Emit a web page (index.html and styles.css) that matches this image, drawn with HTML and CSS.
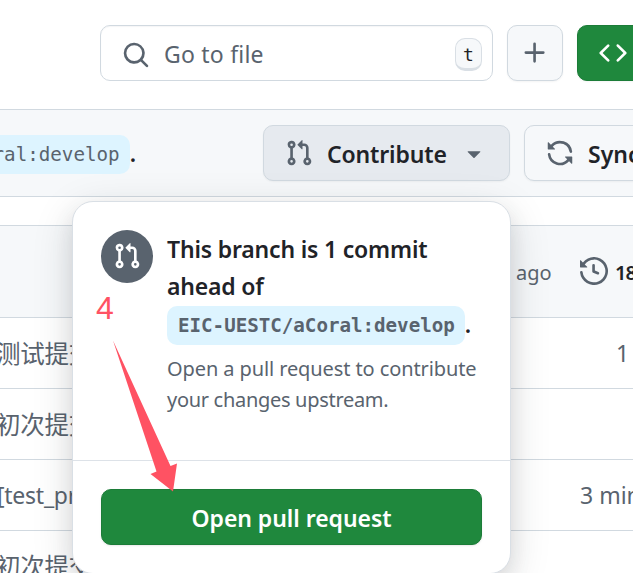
FILE: index.html
```html
<!DOCTYPE html>
<html lang="en">
<head>
<meta charset="utf-8">
<title>Contribute</title>
<link rel="stylesheet" href="styles.css">
</head>
<body>
<svg class="defs" aria-hidden="true">
  <symbol id="pr" viewBox="0 0 16 16"><path d="M1.5 3.25a2.25 2.25 0 1 1 3 2.122v5.256a2.251 2.251 0 1 1-1.5 0V5.372A2.25 2.25 0 0 1 1.5 3.25Zm5.677-.177L9.573.677A.25.25 0 0 1 10 .854V2.5h1A2.5 2.5 0 0 1 13.5 5v5.628a2.251 2.251 0 1 1-1.5 0V5a1 1 0 0 0-1-1h-1v1.646a.25.25 0 0 1-.427.177L7.177 3.427a.25.25 0 0 1 0-.354ZM3.75 2.5a.75.75 0 1 0 0 1.5.75.75 0 0 0 0-1.5Zm0 9.5a.75.75 0 1 0 0 1.5.75.75 0 0 0 0-1.5Zm8.25.75a.75.75 0 1 0 1.5 0 .75.75 0 0 0-1.5 0Z"/></symbol>
</svg>
<div class="page">
  <header class="toolbar">
    <div class="search">
      <svg class="icon" viewBox="0 0 16 16"><path d="M10.68 11.74a6 6 0 0 1-7.922-8.982 6 6 0 0 1 8.982 7.922l3.04 3.04a.749.749 0 0 1-.326 1.275.749.749 0 0 1-.734-.215ZM11.5 7a4.499 4.499 0 1 0-8.997 0A4.499 4.499 0 0 0 11.5 7Z"/></svg>
      <span class="placeholder">Go to file</span>
      <kbd class="key">t</kbd>
    </div>
    <button class="btn square"><svg class="icon" viewBox="0 0 16 16"><path d="M7.75 2a.75.75 0 0 1 .75.75V7h4.25a.75.75 0 0 1 0 1.5H8.5v4.25a.75.75 0 0 1-1.5 0V8.5H2.75a.75.75 0 0 1 0-1.5H7V2.75A.75.75 0 0 1 7.75 2Z"/></svg></button>
    <button class="btn code"><svg class="icon" viewBox="0 0 16 16"><path d="m11.28 3.22 4.25 4.25a.75.75 0 0 1 0 1.06l-4.25 4.25a.749.749 0 0 1-1.275-.326.749.749 0 0 1 .215-.734L13.94 8l-3.72-3.72a.749.749 0 0 1 .326-1.275.749.749 0 0 1 .734.215Zm-6.56 0a.751.751 0 0 1 1.042.018.751.751 0 0 1 .018 1.042L2.06 8l3.72 3.72a.749.749 0 0 1-.326 1.275.749.749 0 0 1-.734-.215L.47 8.53a.75.75 0 0 1 0-1.06Z"/></svg></button>
  </header>
  <section class="branchbar">
    <div class="status"><code class="ref">aCoral:develop</code><span class="dot">.</span></div>
    <button class="btn contribute"><svg class="icon"><use href="#pr"/></svg><span class="label">Contribute</span><svg class="icon caret" viewBox="0 0 16 16"><path d="m4.427 7.427 3.396 3.396a.25.25 0 0 0 .354 0l3.396-3.396A.25.25 0 0 0 11.396 7H4.604a.25.25 0 0 0-.177.427Z"/></svg></button>
    <button class="btn sync"><svg class="icon" viewBox="0 0 16 16"><path d="M1.705 8.005a.75.75 0 0 1 .834.656 5.5 5.5 0 0 0 9.592 2.97l-1.204-1.204a.25.25 0 0 1 .177-.427h3.646a.25.25 0 0 1 .25.25v3.646a.25.25 0 0 1-.427.177l-1.38-1.38A7.002 7.002 0 0 1 1.05 8.84a.75.75 0 0 1 .656-.834ZM8 2.5a5.487 5.487 0 0 0-4.131 1.869l1.204 1.204A.25.25 0 0 1 4.896 6H1.25A.25.25 0 0 1 1 5.75V2.104a.25.25 0 0 1 .427-.177l1.38 1.38A7.002 7.002 0 0 1 14.95 7.16a.75.75 0 0 1-1.49.178A5.5 5.5 0 0 0 8 2.5Z"/></svg><span class="label">Sync</span></button>
  </section>
  <main class="files">
    <div class="row head"><span class="ago">ago</span><svg class="icon" viewBox="0 0 16 16"><path d="m.427 1.927 1.215 1.215a8.002 8.002 0 1 1-1.6 5.685.75.75 0 1 1 1.493-.154 6.5 6.5 0 1 0 1.18-4.458l1.358 1.358A.25.25 0 0 1 3.896 6H.25A.25.25 0 0 1 0 5.75V2.104a.25.25 0 0 1 .427-.177ZM7.75 4a.75.75 0 0 1 .75.75v2.992l2.028.812a.75.75 0 0 1-.557 1.392l-2.5-1A.751.751 0 0 1 7 8.25v-3.5A.75.75 0 0 1 7.75 4Z"/></svg><b class="count">18</b></div>
    <div class="row"><span class="cjk">测试提交</span><span class="age one">1</span></div>
    <div class="row"><span class="cjk">初次提交</span></div>
    <div class="row"><span class="msg">[test_pr</span><span class="age">3 min</span></div>
    <div class="row last"><span class="cjk">初次提交</span></div>
  </main>
  <div class="popover">
    <div class="body">
      <div class="circle"><svg class="icon"><use href="#pr"/></svg></div>
      <div class="copy">
        <div class="title">This branch is 1 commit<br>ahead of</div>
        <div class="refline"><code class="ref bold">EIC-UESTC/aCoral:develop</code><span class="dot">.</span></div>
        <p class="desc"><span class="wide">Open a pull request to contribute</span><br>your changes upstream.</p>
      </div>
    </div>
    <div class="foot"><button class="primary">Open pull request</button></div>
  </div>
  <span class="step">4</span>
  <svg class="arrow" viewBox="0 0 633 573"><path d="M113 340.500 L156.500 471.500 L150.500 474 L173 491.500 L177 463.500 L170.500 466 Z"/></svg>
</div>
</body>
</html>
```
FILE: styles.css
```css
* { box-sizing: border-box; }
body { margin: 0; overflow: hidden; background: #fff; color: #1f2328; font-family: "Noto Sans", "Noto Sans CJK SC", sans-serif; font-size: 23px; }
button { font: inherit; color: inherit; }
.defs { position: absolute; width: 0; height: 0; }
.page { position: relative; width: 633px; height: 573px; overflow: hidden; }
.icon { width: 28px; height: 28px; fill: #59636e; flex: none; display: block; }
.toolbar { height: 109px; display: flex; gap: 14px; padding: 25px 0 0 100px; }
.search { width: 393px; height: 56px; flex: none; display: flex; align-items: center; border: 1px solid #d1d9e0; border-radius: 10px; padding: 0 10px 0 21px; box-shadow: inset 0 1px 1px #1f23280a; }
.search .icon { margin-top: 3px; }
.placeholder { color: #59636e; margin-left: 14px; margin-top: 1px; flex: 1; letter-spacing: .22px; }
.key { width: 27px; height: 33px; border: 1px solid #d9dfe5; border-bottom-width: 3px; border-radius: 10px; background: #f6f8fa; font: 18px/32px "DejaVu Sans Mono", monospace; text-align: center; margin-top: 3px; }
.btn { height: 56px; flex: none; display: flex; align-items: center; border: 1px solid #d1d9e0; border-radius: 10px; background: #f6f8fa; padding: 0; box-shadow: 0 1px 2px #1f23280d; }
.square { width: 56px; justify-content: center; }
.code { width: 150px; background: #1f883d; border-color: #1c7c38; padding-left: 21px; }
.code .icon { fill: #fff; }
.branchbar { height: 88px; border-top: 1px solid #d1d9e0; border-bottom: 1px solid #d1d9e0; background: #f6f8fa; display: flex; gap: 14px; padding-top: 15px; }
.status { width: 249px; flex: none; display: flex; justify-content: flex-end; padding: 10px 113px 0 0; white-space: nowrap; }
.ref { display: inline-block; height: 39px; padding: 0 10px; border-radius: 10px; background: #ddf4ff; color: #59636e; font: 19.200px/39px "DejaVu Sans Mono", monospace; }
.ref.bold { padding-left: 11px; font-weight: 700; letter-spacing: -.02px; }
.dot { font-weight: 600; line-height: 37px; }
.label { font-weight: 600; white-space: nowrap; margin-top: 1px; }
.contribute { width: 247px; background: #e6eaef; padding-left: 21px; }
.contribute .label { width: 120px; margin-left: 14px; letter-spacing: -.15px; text-align: left; }
.caret { margin-left: 13px; }
.sync { width: 190px; padding-left: 21px; }
.sync .label { margin-left: 14px; }
.files { margin-top: 28px; color: #59636e; border-top: 1px solid #d1d9e0; }
.row { height: 71px; display: flex; align-items: center; justify-content: space-between; border-bottom: 1px solid #d1d9e0; white-space: nowrap; }
.row.head { height: 92px; background: #f6f8fa; justify-content: flex-start; padding-left: 516px; font-size: 20px; }
.row.head .icon { margin-top: -2px; }
.ago { width: 64px; flex: none; margin-top: 1px; }
.count { margin-left: 7px; margin-top: 1px; color: #1f2328; font-weight: 600; font-size: 20px; letter-spacing: -1px; }
.cjk { font: 24.500px "Noto Sans CJK SC", sans-serif; margin-left: -4px; margin-top: -2px; letter-spacing: -.3px; }
.msg { margin-left: -3px; letter-spacing: -.25px; }
.age { width: 53px; }
.age.one { width: 17px; }
.last { border: 0; }
.popover { position: absolute; left: 72px; top: 201px; width: 439px; height: 373px; border: 1px solid #d9dfe5; border-radius: 21px; background: #fff; box-shadow: 0 10px 21px rgba(37,41,46,.1), 0 10px 42px rgba(37,41,46,.14); }
.body { height: 259px; display: flex; gap: 14px; padding: 28px 0 0 28px; border-bottom: 1px solid #dde2e8; }
.circle { width: 52px; height: 53px; border-radius: 50%; background: #59636e; display: flex; align-items: center; justify-content: center; flex: none; }
.circle .icon { fill: #fff; margin-top: -1px; }
.copy { white-space: nowrap; }
.title { font-weight: 600; line-height: 37px; letter-spacing: -.18px; padding-top: 1px; }
.refline { display: flex; margin-top: 1px; }
.desc { margin: 8px 0 0; color: #59636e; font-size: 20px; line-height: 31px; letter-spacing: -.3px; }
.wide { letter-spacing: -.1px; }
.foot { padding: 28px; }
.primary { display: block; width: 381px; height: 56px; border: 1px solid #1c7c38; border-radius: 10px; padding: 2px 0 0; background: #1f883d; color: #fff; font-weight: 600; letter-spacing: -.05px; box-shadow: 0 1px 2px #1f23281a; }
.step { position: absolute; left: 96px; top: 287px; color: #ff5263; font: 32px/42px "Liberation Sans", sans-serif; }
.arrow { position: absolute; left: 0; top: 0; width: 633px; height: 573px; fill: #ff5263; }
```
